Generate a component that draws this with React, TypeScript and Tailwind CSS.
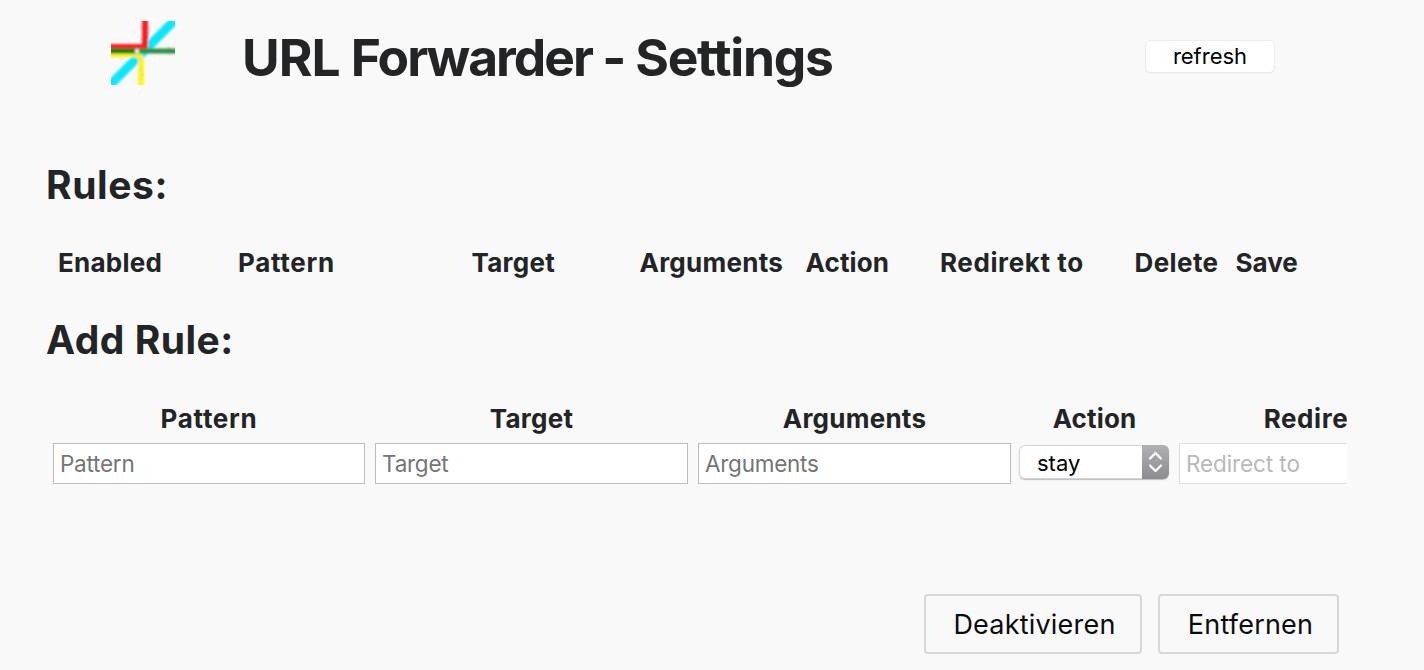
import React from "react";

const ruleColumns = [
  { label: "Enabled", width: "w-[180px] tracking-[0.25px]" },
  { label: "Pattern", width: "w-[233.5px] tracking-[0.7px]" },
  { label: "Target", width: "w-[168px] tracking-[0.25px]" },
  { label: "Arguments", width: "w-[166px] tracking-[0.25px]" },
  { label: "Action", width: "w-[134.5px] tracking-[0.15px]" },
  { label: "Redirekt to", width: "w-[194.5px] tracking-[0.6px]" },
  { label: "Delete", width: "w-[101px] tracking-[0.4px]" },
  { label: "Save", width: "w-[70px]" },
];

function Logo() {
  return (
    <svg className="block h-16 w-16" viewBox="0 0 64 64">
      <defs>
        <filter id="soft" x="0" y="0" width="1" height="1">
          <feGaussianBlur stdDeviation="1" />
        </filter>
      </defs>
      <g fill="none" filter="url(#soft)">
        <path d="M-4 67 L68 -5" stroke="#11e5fb" strokeWidth="9" />
        <path d="M-4 33.5 H25 Q30 34.5 30 40 V68" stroke="#fff01f" strokeWidth="5.5" />
        <path d="M-4 26 H34 V-4" stroke="#fa1e24" strokeWidth="6" />
        <path d="M-4 30 H68" stroke="#2f8f43" strokeWidth="5" />
        <path d="M-4 30 H25" stroke="#177d17" strokeWidth="4.5" />
        <path d="M57 25.5 L64 30 L57 34.5 Z" fill="#2f8f43" opacity=".35" />
        <path d="M25.5 57 L30 64 L34.5 57 Z" fill="#fff01f" opacity=".5" />
        <path d="M29.5 8 L34 1 L38.5 8 Z" fill="#fa1e24" opacity=".3" />
        <circle cx="26" cy="30" r="2.2" fill="#f2f0ee" />
      </g>
    </svg>
  );
}

type FieldProps = { label: string; placeholder: string; width: string; spacing: string; disabled?: boolean };

function Field({ label, placeholder, width, spacing, disabled }: FieldProps) {
  return (
    <div className={`${width} shrink-0`}>
      <div className={`${spacing} flex h-[50px] items-center justify-center text-[26px] font-bold whitespace-nowrap`}>{label}</div>
      <input
        placeholder={placeholder}
        disabled={disabled}
        className={
          disabled
            ? "block h-[41px] w-full border border-[#dedede] bg-white px-[6px] text-[22.5px] tracking-[-0.1px] outline-none placeholder:text-[#b9b9b9] placeholder:opacity-100"
            : "block h-[41px] w-full border border-[#bdbdbd] bg-white px-[6px] text-[22.5px] tracking-[-0.25px] outline-none placeholder:text-[#757575] placeholder:opacity-100"
        }
      />
    </div>
  );
}

export default function App() {
  return (
    <div className="flex h-[670px] w-[1424px] flex-col overflow-hidden bg-[#f9f9fa] font-['Inter',sans-serif] text-[#222426]">
      <header className="flex h-[114px] shrink-0 items-start pl-[111px]">
        <div className="pt-[21px]">
          <Logo />
        </div>
        <h1 className="ml-[67px] w-[904px] pt-[25px] text-[51.5px] leading-[64px] font-bold whitespace-nowrap">
          <span className="tracking-[-1px]">URL </span>
          <span className="tracking-[-2px]">Forwarder </span>
          <span className="tracking-[-1.6px]">- </span>
          <span className="tracking-[-1.3px]">Settings</span>
        </h1>
        <button className="mt-[41px] h-[31px] w-[128px] rounded-[5px] bg-white pb-px text-[22px] leading-[30px] text-black shadow-[0_0_0_1px_#ececec,0_1px_1px_#bcbcbc]">
          refresh
        </button>
      </header>

      <section className="flex h-[155px] shrink-0 flex-col pt-[47px] pl-[46px]">
        <h2 className="h-[48px] text-[39px] leading-[48px] font-bold tracking-[0.6px] whitespace-nowrap">Rules:</h2>
        <div className="mt-[38px] flex pl-[12px] text-[26px] leading-[32px] font-bold">
          {ruleColumns.map((c) => (
            <div key={c.label} className={`${c.width} shrink-0 whitespace-nowrap`}>
              {c.label}
            </div>
          ))}
        </div>
      </section>

      <section className="shrink-0 pt-[47px] pl-[46px]">
        <h2 className="h-[48px] text-[39px] leading-[48px] font-bold tracking-[0.5px] whitespace-nowrap">Add Rule:</h2>
        <div className="mt-[29px] flex w-[1301px] overflow-hidden pl-[7px]">
          <Field label="Pattern" placeholder="Pattern" width="w-[312px]" spacing="tracking-[0.7px]" />
          <div className="w-[10px] shrink-0" />
          <Field label="Target" placeholder="Target" width="w-[313px]" spacing="tracking-[0.25px]" />
          <div className="w-[10px] shrink-0" />
          <Field label="Arguments" placeholder="Arguments" width="w-[313px]" spacing="tracking-[0.25px]" />
          <div className="mr-[10px] ml-[8px] w-[150px] shrink-0">
            <div className="flex h-[50px] items-center justify-center pl-[1px] text-[26px] font-bold tracking-[0.15px]">Action</div>
            <div className="mt-[2px] flex h-[34px] overflow-hidden rounded-[6px] bg-white shadow-[inset_0_0_0_1px_#d5d5d5,0_1px_1px_#bcbcbc]">
              <div className="flex-1 pl-[18px] text-[22px] leading-[36px] text-black">stay</div>
              <div className="flex w-[27px] items-center justify-center bg-linear-to-b from-[#b1b0b5] to-[#8c8b90]">
                <svg className="h-[24px] w-[15px]" viewBox="0 0 15 24" fill="none" stroke="#fff" strokeWidth="2.2" strokeLinecap="round" strokeLinejoin="round">
                  <path d="M2 8.5 L7.5 3 L13 8.5 M2 15.5 L7.5 21 L13 15.5" />
                </svg>
              </div>
            </div>
          </div>
          <Field label="Redirekt to" placeholder="Redirect to" width="w-[313px]" spacing="tracking-[0.6px]" disabled />
        </div>
      </section>

      <footer className="mt-[110px] flex shrink-0 gap-[16px] pl-[924px] text-[27px] tracking-[0.2px] text-[#0c0c0d]">
        <button className="h-[60px] w-[218px] rounded-[4px] border-2 border-[#d7d7db] pt-[2px] pl-[3px] whitespace-nowrap">Deaktivieren</button>
        <button className="h-[60px] w-[181px] rounded-[4px] border-2 border-[#d7d7db] pt-[2px] pl-[4px] whitespace-nowrap">Entfernen</button>
      </footer>
    </div>
  );
}
